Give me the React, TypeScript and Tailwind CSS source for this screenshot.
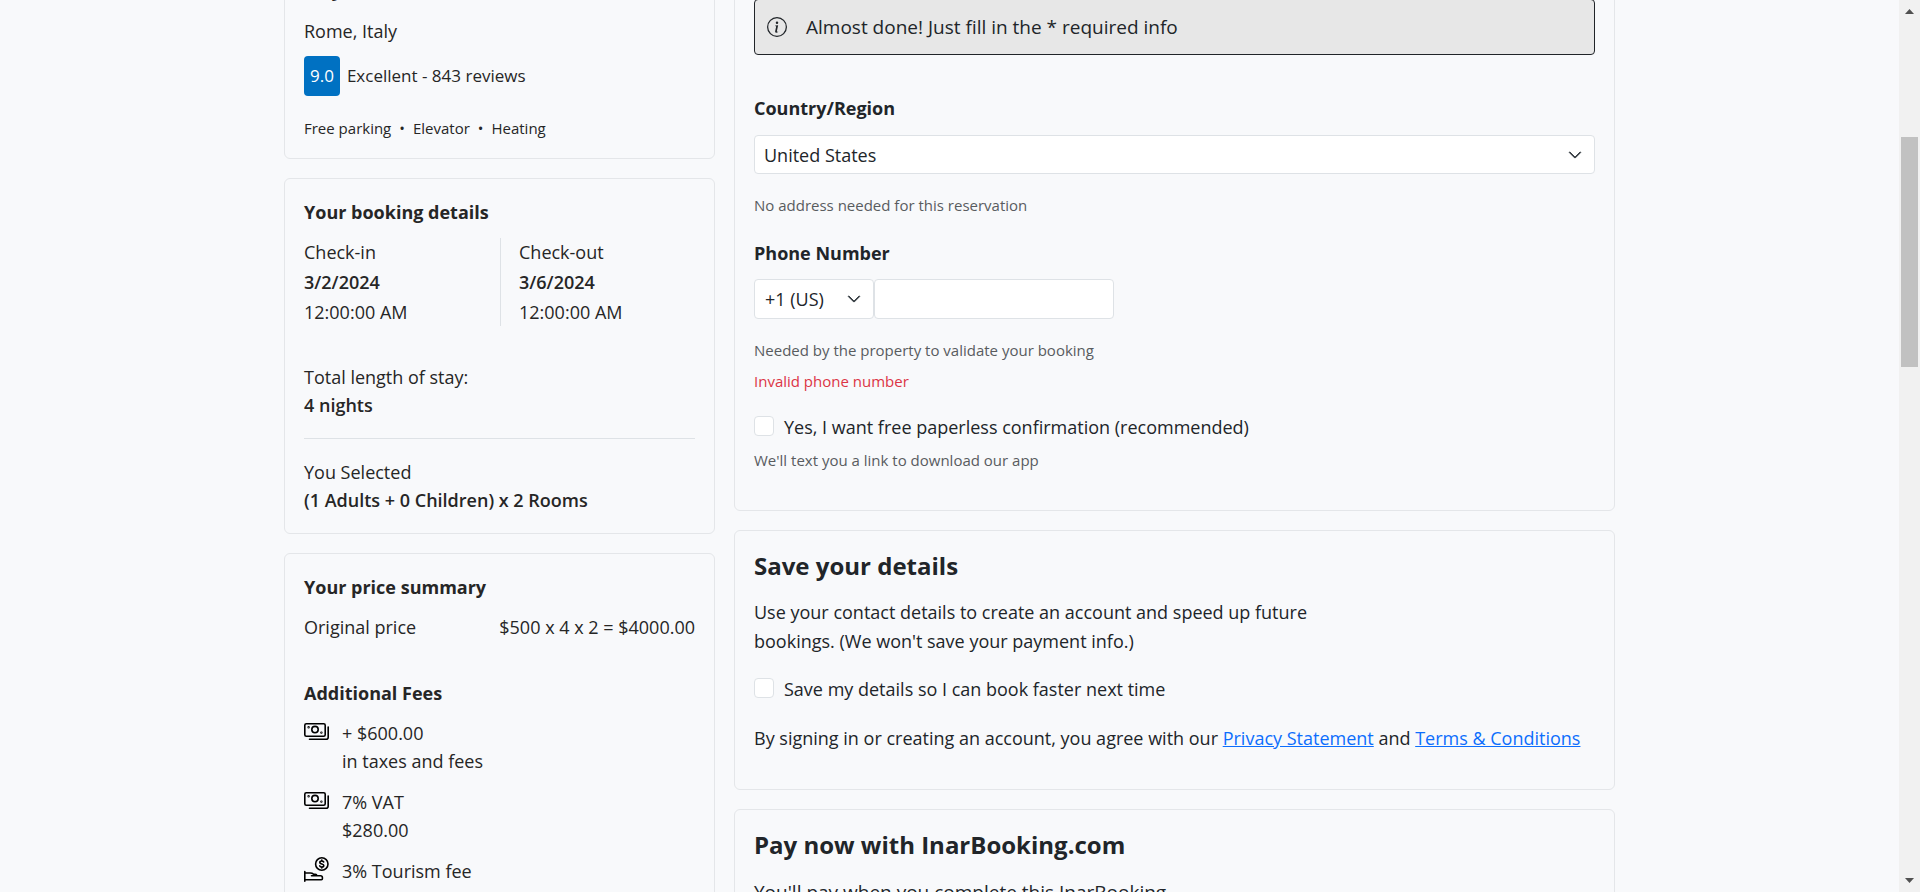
import { useId, type ReactNode } from "react";
import { BsInfoCircle, BsChevronDown } from "react-icons/bs";

function Card({ children }: { children: ReactNode }) {
  return (
    <section className="rounded-md border border-[#e4e6e9] bg-[#f8f9fb] px-[19px] py-[19px]">
      {children}
    </section>
  );
}

function CashIcon() {
  return (
    <svg className="h-[25px] w-[25px] shrink-0" viewBox="0 0 25 25" fill="none" stroke="#000" strokeWidth="1.6" strokeLinecap="round" aria-hidden="true">
      <rect x="0.8" y="4.8" width="20.4" height="12.4" rx="1.5" />
      <circle cx="11" cy="10.6" r="3.2" />
      <path d="M24.2 8v10.200a2 2 0 0 1-2 2H5.500" />
      <circle cx="4.6" cy="8.200" r="0.4" />
      <circle cx="17.4" cy="13.600" r="0.4" />
    </svg>
  );
}

function TipIcon() {
  return (
    <svg className="h-[25px] w-[25px] shrink-0" viewBox="0 0 25 25" fill="none" stroke="#000" strokeWidth="1.6" strokeLinecap="round" strokeLinejoin="round" aria-hidden="true">
      <circle cx="17.8" cy="7" r="6.2" />
      <path d="M19.7 5c-.4-.7-1.1-1-2-1-1.1 0-1.9.6-1.9 1.5 0 2 4 1 4 3 0 .9-.8 1.5-2 1.5-.9 0-1.7-.4-2.1-1.1M17.8 3v1M17.8 10v1" />
      <path d="M.8 14.5v9.7M.8 16h5.5c1.5 0 2.5.5 3.5 1.3h1.5c.9 0 1.5.6 1.5 1.4H7.5M12.7 18.7h3.8c1 0 1.9.8 1.9 1.9v1.1c0 .6-.4 1-1 1H.8" />
    </svg>
  );
}

function Fee({ icon, title, detail }: { icon: ReactNode; title: string; detail: string }) {
  return (
    <li className="flex gap-[13px]">
      {icon}
      <div>
        <p>{title}</p>
        <p>{detail}</p>
      </div>
    </li>
  );
}

function Checkbox({ label }: { label: string }) {
  const id = useId();
  return (
    <div className="flex items-start gap-2.5">
      <input
        id={id}
        type="checkbox"
        className="mt-[3px] h-5 w-5 shrink-0 appearance-none rounded border border-[#dee2e6] bg-white checked:bg-[#0d6efd]"
      />
      <label htmlFor={id}>{label}</label>
    </div>
  );
}

function Sidebar() {
  return (
    <aside className="flex flex-col gap-[19px] text-[#262626]">
      <Card>
        <h2 className="text-xl leading-8 font-bold">City Hotel</h2>
        <p className="mt-3">Rome, Italy</p>
        <div className="mt-[11px] flex items-center gap-[7px] text-[17px]">
          <span className="rounded bg-[#0071c2] px-[6px] py-[6px] text-white">9.0</span>
          <span>Excellent - 843 reviews</span>
        </div>
        <ul className="mt-[21px] flex text-[15px] leading-[22px]">
          <li>Free parking</li>
          <li className="before:mx-2 before:content-['•']">Elevator</li>
          <li className="before:mx-2 before:content-['•']">Heating</li>
        </ul>
      </Card>

      <Card>
        <h2 className="font-bold">Your booking details</h2>
        <div className="mt-3 flex">
          <div className="flex w-[197px] flex-col gap-0.5 border-r border-[#dee2e6]">
            <p>Check-in</p>
            <p className="font-semibold">3/2/2024</p>
            <p>12:00:00 AM</p>
          </div>
          <div className="flex flex-col gap-0.5 pl-[18px]">
            <p>Check-out</p>
            <p className="font-semibold">3/6/2024</p>
            <p>12:00:00 AM</p>
          </div>
        </div>
        <p className="mt-[37px]">Total length of stay:</p>
        <p className="font-semibold">4 nights</p>
        <hr className="my-[19px] border-[#dee2e6]" />
        <p>You Selected</p>
        <p className="font-semibold">(1 Adults + 0 Children) x 2 Rooms</p>
      </Card>

      <Card>
        <h2 className="font-bold">Your price summary</h2>
        <div className="mt-3 flex justify-between">
          <span>Original price</span>
          <span>$500 x 4 x 2 = $4000.00</span>
        </div>
        <h2 className="mt-[38px] font-bold">Additional Fees</h2>
        <ul className="mt-3 flex flex-col gap-[13px]">
          <Fee icon={<CashIcon />} title="+ $600.00" detail="in taxes and fees" />
          <Fee icon={<CashIcon />} title="7% VAT" detail="$280.00" />
          <Fee icon={<TipIcon />} title="3% Tourism fee" detail="$120.00" />
        </ul>
      </Card>
    </aside>
  );
}

function Details() {
  return (
    <main className="flex flex-col gap-[19px] text-[#212529]">
      <Card>
        <div className="mt-[26px] flex items-center gap-[19px] rounded border border-[#212529] bg-[#e7e7e7] px-3 py-3 text-[19px] leading-[30px]">
          <BsInfoCircle className="h-5 w-5" aria-hidden="true" />
          <p>Almost done! Just fill in the * required info</p>
        </div>
        <label htmlFor="country" className="mt-[39px] block font-bold">
          Country/Region
        </label>
        <div className="mt-[13px] grid items-center">
          <select
            id="country"
            className="col-start-1 row-start-1 h-[39px] w-full appearance-none rounded border border-[#dee2e6] bg-white px-[9px]"
          >
            <option>United States</option>
          </select>
          <BsChevronDown className="pointer-events-none col-start-1 row-start-1 mr-[13px] h-3.5 w-3.5 justify-self-end stroke-1 text-[#343a40]" aria-hidden="true" />
        </div>
        <p className="mt-[19px] text-[15px] leading-6 text-[#595c5f]">No address needed for this reservation</p>
        <label htmlFor="phone" className="mt-[22px] block font-bold">
          Phone Number
        </label>
        <div className="mt-3 flex">
          <div className="grid items-center">
            <select
              aria-label="Country code"
              className="col-start-1 row-start-1 h-10 w-[120px] appearance-none rounded border border-[#dee2e6] bg-white px-2.5"
            >
              <option>+1 (US)</option>
            </select>
            <BsChevronDown className="pointer-events-none col-start-1 row-start-1 mr-[13px] h-3.5 w-3.5 justify-self-end stroke-1 text-[#343a40]" aria-hidden="true" />
          </div>
          <input id="phone" type="tel" className="h-10 w-60 rounded border border-[#dee2e6] bg-white px-2.5" />
        </div>
        <p className="mt-[19px] text-[15px] leading-6 text-[#595c5f]">Needed by the property to validate your booking</p>
        <p className="mt-[7px] text-[15px] leading-6 text-[#dc3545]">Invalid phone number</p>
        <div className="mt-5">
          <Checkbox label="Yes, I want free paperless confirmation (recommended)" />
        </div>
        <p className="mt-[7px] mb-[19px] text-[15px] leading-6 text-[#595c5f]">We'll text you a link to download our app</p>
      </Card>

      <Card>
        <h2 className="text-2xl leading-8 font-bold">Save your details</h2>
        <p className="mt-4 max-w-[580px] leading-[29px]">
          Use your contact details to create an account and speed up future bookings. (We won't save your payment info.)
        </p>
        <div className="mt-[19px]">
          <Checkbox label="Save my details so I can book faster next time" />
        </div>
        <p className="mt-[21px] mb-[18px]">
          By signing in or creating an account, you agree with our{" "}
          <a href="#privacy" className="text-[#0d6efd] underline">Privacy Statement</a> and{" "}
          <a href="#terms" className="text-[#0d6efd] underline">Terms &amp; Conditions</a>
        </p>
      </Card>

      <Card>
        <h2 className="text-2xl leading-8 font-bold">Pay now with InarBooking.com</h2>
        <p className="mt-4 text-[19px] leading-[30px]">You'll pay when you complete this InarBooking</p>
      </Card>
    </main>
  );
}

function Scrollbar() {
  return (
    <div className="flex w-[21px] shrink-0 flex-col items-center justify-between bg-[#f1f1f1] pt-[9px] pb-[9px]" aria-hidden="true">
      <svg className="h-[5px] w-[9px]" viewBox="0 0 9 5" fill="#505050">
        <path d="M0 5 4.5 0 9 5z" />
      </svg>
      <div className="flex w-[17px] flex-1 flex-col pt-[123px]">
        <div className="h-[230px] bg-[#c1c1c1]" />
      </div>
      <svg className="h-[5px] w-[9px]" viewBox="0 0 9 5" fill="#505050">
        <path d="M0 0h9L4.5 5z" />
      </svg>
    </div>
  );
}

export default function App() {
  return (
    <div className="flex h-screen overflow-hidden bg-[#f8f9fb] font-['Open_Sans','Noto_Sans',sans-serif] text-lg leading-7">
      <div className="min-w-0 flex-1 overflow-hidden">
        <div className="mx-auto -mt-[47px] grid max-w-[1331px] grid-cols-[431fr_881fr] items-start gap-[19px]">
          <Sidebar />
          <Details />
        </div>
      </div>
      <Scrollbar />
    </div>
  );
}
